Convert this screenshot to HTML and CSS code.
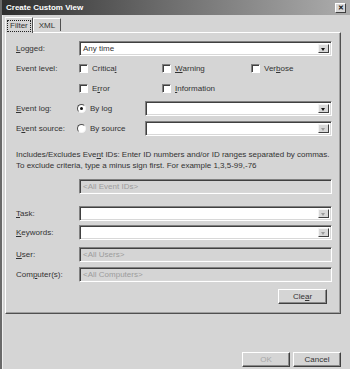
FILE: index.html
```html
<!DOCTYPE html>
<html lang="en">
<head>
    <meta charset="UTF-8">
    <title>Create Custom View</title>
    <link rel="stylesheet" href="styles.css">
</head>
<body>
    <div class="window">
        <div class="titlebar">
            <span class="title">Create Custom View</span>
            <span class="close">&#x2715;</span>
        </div>
        <div class="tabs">
            <div class="tab active"><span class="focus">Filter</span></div>
            <div class="tab">XML</div>
        </div>
        <div class="panel">
            <div class="row">
                <span class="lbl"><u>L</u>ogged:</span>
                <div class="combo"><span class="value">Any time</span><span class="drop"></span></div>
            </div>
            <div class="row levels">
                <span class="lbl">Event level:</span>
                <div class="checks">
                    <span class="check"><i class="box"></i>Critica<u>l</u></span>
                    <span class="check"><i class="box"></i><u>W</u>arning</span>
                    <span class="check"><i class="box"></i>Ver<u>b</u>ose</span>
                    <span class="check"><i class="box"></i>E<u>r</u>ror</span>
                    <span class="check"><i class="box"></i><u>I</u>nformation</span>
                </div>
            </div>
            <div class="row source">
                <span class="lbl"><u>E</u>vent log:</span>
                <span class="radio"><i class="dot on"></i>By log</span>
                <div class="combo"><span class="value"></span><span class="drop"></span></div>
            </div>
            <div class="row source">
                <span class="lbl">E<u>v</u>ent source:</span>
                <span class="radio"><i class="dot"></i>By source</span>
                <div class="combo"><span class="value"></span><span class="drop disabled"></span></div>
            </div>
            <p class="note">Includes/Excludes Eve<u>n</u>t IDs: Enter ID numbers and/or ID ranges separated by commas.<br>To exclude criteria, type a minus sign first. For example 1,3,5-99,-76</p>
            <div class="row ids">
                <span class="lbl"></span>
                <div class="field disabled">&lt;All Event IDs&gt;</div>
            </div>
            <div class="row task">
                <span class="lbl"><u>T</u>ask:</span>
                <div class="combo"><span class="value"></span><span class="drop disabled"></span></div>
            </div>
            <div class="row keywords">
                <span class="lbl"><u>K</u>eywords:</span>
                <div class="combo"><span class="value"></span><span class="drop disabled"></span></div>
            </div>
            <div class="row user">
                <span class="lbl"><u>U</u>ser:</span>
                <div class="field disabled">&lt;All Users&gt;</div>
            </div>
            <div class="row computer">
                <span class="lbl">Com<u>p</u>uter(s):</span>
                <div class="field disabled">&lt;All Computers&gt;</div>
            </div>
            <div class="clear-row">
                <button class="btn">Cle<u>a</u>r</button>
            </div>
        </div>
        <div class="footer">
            <button class="btn ok" disabled>OK</button>
            <button class="btn">Cancel</button>
        </div>
    </div>
</body>
</html>
```

FILE: styles.css
```css
* {
    box-sizing: border-box;
}

body {
    margin: 0;
    background: #d5d5d5;
    font-family: "Liberation Sans", Arial, sans-serif;
    font-size: 8px;
    color: #333333;
}

u {
    text-decoration: underline;
    text-underline-offset: 1px;
}

.window {
    width: 350px;
    height: 369px;
    background: #d5d5d5;
    border-left: 2px solid #6a6a6a;
    box-shadow: inset 1px 0 0 #f0f0f0;
    overflow: hidden;
}

.titlebar {
    height: 15px;
    display: flex;
    align-items: center;
    justify-content: space-between;
    padding: 0 4px 0 4px;
    background: linear-gradient(to right, #2e2e2e 0%, #6a6a6a 45%, #adadad 100%);
}

.title {
    color: #ffffff;
    font-weight: bold;
    font-size: 8px;
}

.close {
    width: 11px;
    height: 10px;
    display: flex;
    align-items: center;
    justify-content: center;
    background: #d8d8d8;
    border: 1px solid;
    border-color: #ffffff #404040 #404040 #ffffff;
    font-size: 7px;
    font-weight: bold;
    color: #111;
    line-height: 1;
}

/* tabs */
.tabs {
    display: flex;
    align-items: flex-end;
    height: 17px;
    padding-left: 3px;
    position: relative;
    z-index: 1;
}

.tab {
    height: 13px;
    padding: 0 5px;
    display: flex;
    align-items: center;
    border: 1px solid;
    border-color: #ffffff #505050 transparent #ffffff;
    border-bottom: none;
    margin-bottom: 1px;
}

.tab.active {
    height: 16px;
    padding: 0 2px;
    margin-bottom: -1px;
    background: #d5d5d5;
    border-color: #ffffff #505050 transparent #f4f4f4;
}

.focus {
    outline: 1px dotted #222;
    padding: 0 2px;
    line-height: 10px;
}

/* panel */
.panel {
    margin-left: 3px;
    width: 336px;
    height: 282px;
    border: 1px solid;
    border-color: #ffffff #505050 #505050 #ffffff;
    box-shadow: inset -1px -1px 0 #a0a0a0;
    padding: 8px 8px 0 10px;
}

.row {
    display: flex;
    align-items: center;
    height: 15px;
}

.lbl {
    width: 63px;
    flex: none;
}

.combo,
.field {
    flex: 1;
    height: 15px;
    display: flex;
    border: 1px solid;
    border-color: #808080 #ffffff #ffffff #808080;
    box-shadow: inset 1px 1px 0 #404040, inset -1px -1px 0 #d8d8d8;
    background: #ffffff;
}

.combo .value {
    flex: 1;
    padding: 2px 3px;
    line-height: 9px;
}

.drop {
    width: 11px;
    margin: 2px 2px 2px 0;
    background: #d8d8d8;
    border: 1px solid;
    border-color: #f4f4f4 #404040 #404040 #f4f4f4;
    position: relative;
}

.drop::after {
    content: "";
    position: absolute;
    left: 2px;
    top: 3px;
    border-left: 2.5px solid transparent;
    border-right: 2.5px solid transparent;
    border-top: 3px solid #111;
}

.drop.disabled::after {
    border-top-color: #9a9a9a;
}

.field.disabled {
    background: #d5d5d5;
    color: #9c9c9c;
    padding: 2px 3px;
    line-height: 9px;
}

/* event level */
.row.levels {
    height: 35px;
    margin-top: 5px;
    align-items: flex-start;
}

.levels .lbl {
    line-height: 15px;
}

.checks {
    flex: 1;
    display: grid;
    grid-template-columns: 83px 89px 1fr;
    grid-auto-rows: 15px;
    row-gap: 5px;
}

.check {
    display: flex;
    align-items: center;
}

.box {
    width: 9px;
    height: 9px;
    margin-right: 4px;
    background: #ffffff;
    border: 1px solid;
    border-color: #808080 #ffffff #ffffff #808080;
    box-shadow: inset 1px 1px 0 #404040;
}

/* radios */
.row.source {
    margin-top: 5px;
}

.radio {
    width: 68px;
    margin-left: -2px;
    flex: none;
    display: flex;
    align-items: center;
}

.dot {
    width: 9px;
    height: 9px;
    margin-right: 4px;
    border-radius: 50%;
    background: #ffffff;
    border: 1px solid;
    border-color: #505050 #f4f4f4 #f4f4f4 #505050;
    position: relative;
}

.dot.on::after {
    content: "";
    position: absolute;
    left: 2px;
    top: 2px;
    width: 3px;
    height: 3px;
    border-radius: 50%;
    background: #111;
}

.note {
    margin: 13px 0 0 0;
    line-height: 11px;
    white-space: nowrap;
}

.row.ids {
    margin-top: 8px;
}

.row.task {
    margin-top: 12px;
}

.row.keywords {
    margin-top: 4px;
}

.row.user {
    margin-top: 7px;
}

.row.computer {
    margin-top: 5px;
}

/* buttons */
.clear-row {
    display: flex;
    justify-content: flex-end;
    margin-top: 7px;
    padding-right: 5px;
}

.btn {
    width: 49px;
    height: 15px;
    padding: 0;
    font-family: inherit;
    font-size: 8px;
    color: #333333;
    background: #d5d5d5;
    border: 1px solid;
    border-color: #ffffff #404040 #404040 #ffffff;
    box-shadow: inset -1px -1px 0 #8a8a8a;
}

.btn:disabled {
    color: #a8a8a8;
}

.footer {
    display: flex;
    justify-content: flex-end;
    gap: 3px;
    margin-top: 38px;
    padding-right: 9px;
}

.footer .btn {
    width: 48px;
}
```
